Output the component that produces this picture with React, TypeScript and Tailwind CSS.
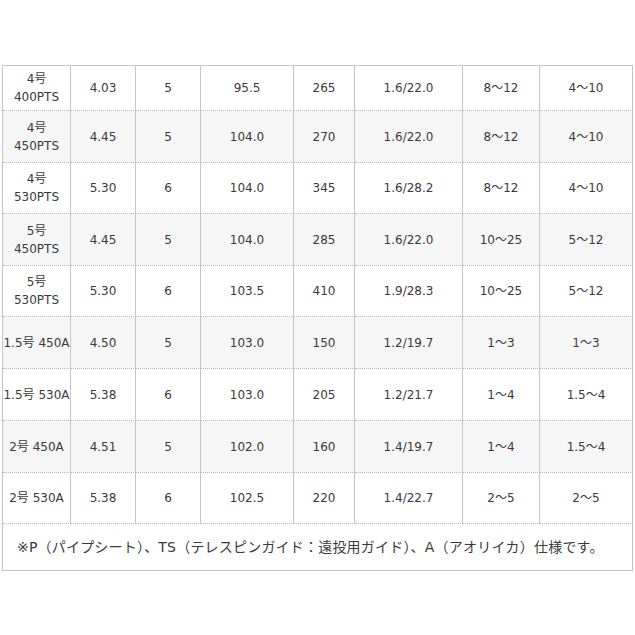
import React from "react";

const rows: string[][] = [
  ["4号\n400PTS", "4.03", "5", "95.5", "265", "1.6/22.0", "8～12", "4～10"],
  ["4号\n450PTS", "4.45", "5", "104.0", "270", "1.6/22.0", "8～12", "4～10"],
  ["4号\n530PTS", "5.30", "6", "104.0", "345", "1.6/28.2", "8～12", "4～10"],
  ["5号\n450PTS", "4.45", "5", "104.0", "285", "1.6/22.0", "10～25", "5～12"],
  ["5号\n530PTS", "5.30", "6", "103.5", "410", "1.9/28.3", "10～25", "5～12"],
  ["1.5号 450A", "4.50", "5", "103.0", "150", "1.2/19.7", "1～3", "1～3"],
  ["1.5号 530A", "5.38", "6", "103.0", "205", "1.2/21.7", "1～4", "1.5～4"],
  ["2号 450A", "4.51", "5", "102.0", "160", "1.4/19.7", "1～4", "1.5～4"],
  ["2号 530A", "5.38", "6", "102.5", "220", "1.4/22.7", "2～5", "2～5"],
];

const heights = ["h-[45px]", "h-[52px]", "h-[51px]", "h-[52px]", "h-[51px]", "h-[52px]", "h-[52px]", "h-[52px]", "h-[51px]"];

export default function App() {
  return (
    <div
      className="w-[635px] h-[635px] bg-white pt-[65px] pl-[2px] text-[#3a3a3a]"
      style={{ fontFamily: '"DejaVu Sans", "Noto Sans CJK JP", sans-serif' }}
    >
      <div className="w-[631px] border-l border-t border-[#c6c6c6]">
        {rows.map((r, i) => (
          <div
            key={i}
            className={`grid grid-cols-[68px_65px_65px_93px_61px_108px_77px_93px] ${heights[i]} ${
              i % 2 === 1 ? "bg-[#f6f6f6]" : "bg-white"
            }`}
          >
            {r.map((c, j) => (
              <div
                key={j}
                className="flex items-center justify-center text-center border-r border-r-[#c6c6c6] border-b border-dotted border-b-[#b8b8b8] text-[12px] leading-[18px] whitespace-pre-line"
                style={{ borderRightStyle: "solid" }}
              >
                {c}
              </div>
            ))}
          </div>
        ))}
        <div className="h-[47px] flex items-center pl-[14px] border-r border-b border-[#c6c6c6] text-[14px] tracking-[0.2px]">
          ※P（パイプシート）、TS（テレスピンガイド：遠投用ガイド）、A（アオリイカ）仕様です。
        </div>
      </div>
    </div>
  );
}
